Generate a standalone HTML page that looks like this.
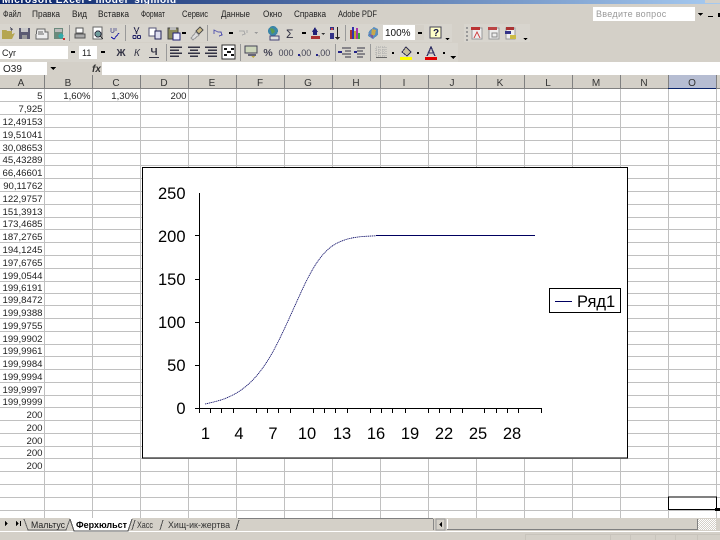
<!DOCTYPE html>
<html>
<head>
<meta charset="utf-8">
<style>
html,body{margin:0;padding:0;width:720px;height:540px;overflow:hidden;background:#fff}
svg{display:block}
text{font-family:"Liberation Sans","DejaVu Sans",sans-serif}
.m text{font-size:9px;fill:#222}
.h text{font-size:10px;fill:#333;text-anchor:middle}
.v text{font-size:9.6px;fill:#222;text-anchor:end}
.c text{font-size:16.5px;fill:#000}
.y text{text-anchor:end}
.x text{text-anchor:middle}
.soft{filter:blur(.35px)}
</style>
</head>
<body>
<svg width="720" height="540" viewBox="0 0 720 540" xmlns="http://www.w3.org/2000/svg" shape-rendering="crispEdges">
<defs>
<linearGradient id="tb" x1="0" x2="1" y1="0" y2="0"><stop offset="0" stop-color="#0a246a"/><stop offset="1" stop-color="#a6caf0"/></linearGradient>
<pattern id="dith" width="2" height="2" patternUnits="userSpaceOnUse"><rect width="2" height="2" fill="#d4d0c8"/><rect width="1" height="1" fill="#fff"/><rect x="1" y="1" width="1" height="1" fill="#fff"/></pattern>
</defs>

<!-- chrome -->
<rect width="720" height="75" fill="#d4d0c8"/>
<rect width="720" height="4" fill="url(#tb)"/>
<clipPath id="tc"><rect width="720" height="4"/></clipPath>
<g clip-path="url(#tc)"><text x="2" y="3" font-size="10" font-weight="bold" fill="#fff" letter-spacing=".6">Microsoft Excel - model_sigmoid</text></g>
<rect x="705" y="0" width="15" height="3" fill="#d4d0c8"/>

<!-- menu -->
<g class="m soft">
<text x="3" y="17" textLength="18" lengthAdjust="spacingAndGlyphs">Файл</text><text x="32" y="17" textLength="28" lengthAdjust="spacingAndGlyphs">Правка</text><text x="72" y="17" textLength="15" lengthAdjust="spacingAndGlyphs">Вид</text><text x="98" y="17" textLength="31" lengthAdjust="spacingAndGlyphs">Вставка</text><text x="141" y="17" textLength="24" lengthAdjust="spacingAndGlyphs">Формат</text><text x="182" y="17" textLength="26" lengthAdjust="spacingAndGlyphs">Сервис</text><text x="221" y="17" textLength="29" lengthAdjust="spacingAndGlyphs">Данные</text><text x="263" y="17" textLength="19" lengthAdjust="spacingAndGlyphs">Окно</text><text x="294" y="17" textLength="32" lengthAdjust="spacingAndGlyphs">Справка</text><text x="338" y="17" textLength="39" lengthAdjust="spacingAndGlyphs">Adobe PDF</text>
</g>
<rect x="593" y="7" width="102" height="14" fill="#fff"/>
<text x="596" y="17" font-size="9" fill="#999" letter-spacing=".3" class="soft">Введите вопрос</text>
<path d="M698 13h5l-2.500 3z" fill="#000"/>
<rect x="708" y="16" width="5" height="1" fill="#000"/><rect x="718" y="13" width="2" height="4" fill="#000"/>

<!-- toolbar backgrounds -->
<rect x="0" y="24" width="452" height="18" fill="#d8d5ce"/>
<rect x="0" y="43" width="458" height="19" fill="#d8d5ce"/>
<rect x="464" y="24" width="66" height="18" fill="#d8d5ce"/>

<!-- toolbar 1 -->
<g class="soft">
<path d="M2 30h4l1 1h5v3l3-1-3 6H2z" fill="#b5a652"/><path d="M10 27l3 2-2 2z" fill="#556"/>
<path d="M19 28h11v11H19z" fill="#5a5a72"/><path d="M21 28h7v4h-7z" fill="#c8c8c8"/><path d="M22 35h5v4h-5z" fill="#999"/>
<path d="M37 29h8v3h3v7H36v-3z" fill="#eee" stroke="#666"/><path d="M38 32h5M38 34h6" stroke="#666"/>
<path d="M54 28h9v11h-9z" fill="#6a8a7c"/><rect x="55" y="29" width="7" height="3" fill="#bbb"/><circle cx="61" cy="36" r="2.400" fill="#3aa"/><rect x="63" y="38" width="2" height="2" fill="#c33"/>
<rect x="69" y="25" width="1" height="16" fill="#999"/>
<path d="M75 34h10v4H75z" fill="#aaa" stroke="#555"/><path d="M76 28h7v5h-7z" fill="#fff" stroke="#555"/>
<path d="M93 27h9v12h-9z" fill="#fff" stroke="#666"/><circle cx="98" cy="34" r="3" fill="#6f9c9c" stroke="#334"/><path d="M100 36l3 3" stroke="#333"/>
<path d="M111 28v3c0 2 3 2 3 0v-3M116 28v3" stroke="#669" fill="none"/><path d="M111 37l3 2 5-6" stroke="#22a" fill="none"/>
<rect x="125" y="25" width="1" height="16" fill="#999"/>
<path d="M134 27l3 7M139 27l-3 7" stroke="#335" fill="none"/><circle cx="134.500" cy="37" r="1.700" fill="none" stroke="#226"/><circle cx="139" cy="37" r="1.700" fill="none" stroke="#226"/>
<path d="M149 28h7v8h-7z" fill="#fff" stroke="#557"/><path d="M155 31h6v8h-6z" fill="#dde" stroke="#225"/>
<path d="M168 28h10v11h-10z" fill="#8a8a5c" stroke="#444"/><rect x="170" y="27" width="6" height="3" fill="#bbb"/><path d="M173 33h7v7h-7z" fill="#eef" stroke="#227"/>
<rect x="182" y="32" width="4" height="2" fill="#000"/>
<path d="M191 38l5-6 3 3-6 5z" fill="#ddd" stroke="#999"/><path d="M196 31l4-4 3 3-4 4z" fill="#cb8" stroke="#555"/>
<rect x="207" y="25" width="1" height="16" fill="#999"/>
<path d="M214 34v-4l4 2 3 0 1 3-3 1" stroke="#5a5ab0" fill="none"/>
<rect x="229" y="32" width="4" height="2" fill="#000"/>
<path d="M239 31h5l1 3-3 1M247 33v-3" stroke="#aaa" fill="none"/>
<path d="M254 32h4l-2 2z" fill="#999"/>
<circle cx="273" cy="31" r="5" fill="#3c86a8"/><path d="M270 28l4 1 1 3-3 2z" fill="#5a9a50"/><rect x="270" y="36" width="9" height="4" fill="#ddd" stroke="#447"/>
<text x="286" y="38" font-size="12" fill="#334" font-family="DejaVu Sans">Σ</text>
<rect x="302" y="32" width="4" height="2" fill="#000"/>
<path d="M315 27l3 5h-6z" fill="#227"/><rect x="313" y="32" width="4" height="3" fill="#227"/><rect x="311" y="36" width="9" height="3" fill="#a33"/><path d="M321 33h4l-2 2z" fill="#333"/>
<path d="M330 27h4v3h-4zM330 33h4v6h-4z" fill="#338"/><rect x="331" y="28" width="2" height="2" fill="#c44"/><path d="M337 27h1v10h2l-2.500 3-2.500-3h2z" fill="#222"/>
<rect x="345" y="25" width="1" height="16" fill="#999"/>
<rect x="350" y="30" width="2" height="9" fill="#a33"/><rect x="352" y="27" width="2" height="12" fill="#33a"/><rect x="354" y="31" width="2" height="8" fill="#ba3"/><rect x="356" y="28" width="2" height="11" fill="#a3a"/><rect x="358" y="33" width="2" height="6" fill="#3a3"/>
<path d="M369 31l5-4 4 2v6l-5 4-5-3z" fill="#5b8fbf"/><path d="M372 29l4 1-1 5-4 1z" fill="#c9a84c"/><path d="M369 34l4 1v4z" fill="#7a5aa0"/>
</g>
<rect x="383" y="25" width="32" height="15" fill="#fff"/>
<text x="385" y="36" font-size="10" fill="#111" class="soft">100%</text>
<rect x="415" y="25" width="9" height="15" fill="#d4d0c8"/><rect x="418" y="32" width="4" height="2" fill="#000"/>
<g class="soft">
<rect x="430" y="27" width="11" height="11" fill="#ffffc8" stroke="#445"/><text x="433" y="36" font-size="10" font-weight="bold" fill="#114">?</text>
<path d="M445 38h5l-2.500 2z" fill="#000"/>
<rect x="466" y="27" width="2" height="2" fill="#999"/><rect x="466" y="31" width="2" height="2" fill="#999"/><rect x="466" y="35" width="2" height="2" fill="#999"/><rect x="466" y="39" width="2" height="2" fill="#999"/>
<path d="M472 28h10v11h-10z" fill="#eee" stroke="#999"/><rect x="471" y="27" width="9" height="3" fill="#b33"/><path d="M474 38l3-6 3 6" stroke="#c33" fill="none"/>
<path d="M489 28h10v11h-10z" fill="#eee" stroke="#999"/><rect x="488" y="27" width="9" height="3" fill="#b44"/><path d="M492 33h5v4h-5z" fill="none" stroke="#888"/>
<path d="M506 28h9v11h-9z" fill="#eee" stroke="#999"/><rect x="506" y="27" width="8" height="3" fill="#a33"/><rect x="505" y="31" width="6" height="3" fill="#338"/><rect x="510" y="35" width="6" height="4" fill="#cb4"/>
<path d="M523 38h5l-2.500 2z" fill="#000"/>
</g>

<!-- toolbar 2 -->
<rect x="0" y="46" width="68" height="13" fill="#fff"/>
<text x="2" y="56" font-size="9" fill="#222" class="soft">Cyr</text>
<rect x="71" y="51" width="4" height="2" fill="#000"/>
<rect x="79" y="46" width="18" height="13" fill="#fff"/>
<text x="82" y="56" font-size="9" fill="#222" class="soft">11</text>
<rect x="101" y="51" width="4" height="2" fill="#000"/>
<g class="soft">
<text x="121" y="56" font-size="10" font-weight="bold" fill="#334" text-anchor="middle">Ж</text>
<text x="137" y="56" font-size="10" font-style="italic" fill="#334" text-anchor="middle">К</text>
<text x="154" y="55" font-size="10" font-weight="bold" fill="#334" text-anchor="middle">Ч</text><rect x="149" y="57" width="10" height="1" fill="#334"/>
<rect x="166" y="44" width="1" height="17" fill="#999"/>
<path d="M170 47h12M170 50h9M170 53h12M170 56h9M188 47h12M190 50h8M188 53h12M190 56h8M205 47h12M208 50h9M205 53h12M208 56h9" stroke="#334" stroke-width="1.500" fill="none"/>
<rect x="222" y="45" width="13" height="14" fill="#fff" stroke="#333"/><path d="M224 49h3M231 49h3M224 55h3M231 55h3M227 52h4" stroke="#111" stroke-width="2"/>
<rect x="240" y="44" width="1" height="17" fill="#999"/>
<rect x="245" y="46" width="12" height="7" fill="#cdd6bb" stroke="#445"/><path d="M250 55h6l-3 3z" fill="#ba4"/><rect x="248" y="54" width="8" height="2" fill="#667"/>
<text x="268" y="56" font-size="10.500" font-weight="bold" fill="#445" text-anchor="middle">%</text>
<text x="286" y="56" font-size="9" fill="#445" text-anchor="middle">000</text>
<text x="305" y="56" font-size="9" fill="#445" text-anchor="middle">,00</text><rect x="298" y="54" width="2" height="2" fill="#228"/>
<text x="324" y="56" font-size="9" fill="#445" text-anchor="middle">,00</text><rect x="316" y="54" width="2" height="2" fill="#228"/>
<rect x="335" y="44" width="1" height="17" fill="#999"/>
<path d="M342 48h9M345 51h6M342 54h9M345 57h6" stroke="#334" fill="none"/><path d="M338 51h4v2h-4z" fill="#228"/>
<path d="M357 48h8M357 51h6M357 54h8M357 57h6" stroke="#334" fill="none"/><path d="M354 51h3v2h-3z" fill="#228"/>
<rect x="370" y="44" width="1" height="17" fill="#999"/>
<path d="M376 47h10v9h-10zM376 50h10M376 53h10M379 47v9M383 47v9" stroke="#aaa" stroke-dasharray="1 1" fill="none"/><rect x="376" y="57" width="11" height="1" fill="#666"/>
<rect x="392" y="52" width="2" height="2" fill="#000"/>
<path d="M402 52l4-5 5 5-4 4z" fill="#c8c0a0" stroke="#335"/><rect x="400" y="57" width="12" height="3" fill="#ffff00"/>
<rect x="417" y="52" width="2" height="2" fill="#000"/>
<path d="M427 56l4-9 4 9M429 53h4" stroke="#336" fill="none" stroke-width="1.300"/><rect x="425" y="57" width="12" height="3" fill="#e00000"/>
<rect x="443" y="52" width="2" height="2" fill="#000"/>
<path d="M450 56h6l-3 3z" fill="#000"/>
</g>

<!-- formula bar -->
<rect x="0" y="62" width="720" height="13" fill="#fff"/>
<rect x="47" y="62" width="55" height="13" fill="#d4d0c8"/>
<text x="3" y="72" font-size="10" fill="#222" class="soft">O39</text>
<path d="M50 67h6l-3 3z" fill="#000"/>
<text x="92" y="72" font-size="10" font-style="italic" font-weight="bold" fill="#333" font-family="Liberation Serif">fx</text>

<!-- sheet grid -->
<rect y="88" width="720" height="430" fill="#fff"/>
<g fill="#c0c0c0">
<rect x="44" y="88" width="1" height="430"/><rect x="92" y="88" width="1" height="430"/><rect x="140" y="88" width="1" height="430"/><rect x="188" y="88" width="1" height="430"/><rect x="236" y="88" width="1" height="430"/><rect x="284" y="88" width="1" height="430"/><rect x="332" y="88" width="1" height="430"/><rect x="380" y="88" width="1" height="430"/><rect x="428" y="88" width="1" height="430"/><rect x="476" y="88" width="1" height="430"/><rect x="524" y="88" width="1" height="430"/><rect x="572" y="88" width="1" height="430"/><rect x="620" y="88" width="1" height="430"/><rect x="668" y="88" width="1" height="430"/><rect x="716" y="88" width="1" height="430"/>
<rect y="101" width="720" height="1"/><rect y="114" width="720" height="1"/><rect y="127" width="720" height="1"/><rect y="140" width="720" height="1"/><rect y="153" width="720" height="1"/><rect y="165" width="720" height="1"/><rect y="178" width="720" height="1"/><rect y="191" width="720" height="1"/><rect y="204" width="720" height="1"/><rect y="217" width="720" height="1"/><rect y="229" width="720" height="1"/><rect y="242" width="720" height="1"/><rect y="255" width="720" height="1"/><rect y="268" width="720" height="1"/><rect y="281" width="720" height="1"/><rect y="293" width="720" height="1"/><rect y="305" width="720" height="1"/><rect y="318" width="720" height="1"/><rect y="331" width="720" height="1"/><rect y="344" width="720" height="1"/><rect y="356" width="720" height="1"/><rect y="369" width="720" height="1"/><rect y="382" width="720" height="1"/><rect y="395" width="720" height="1"/><rect y="407" width="720" height="1"/><rect y="420" width="720" height="1"/><rect y="433" width="720" height="1"/><rect y="446" width="720" height="1"/><rect y="458" width="720" height="1"/><rect y="471" width="720" height="1"/><rect y="484" width="720" height="1"/><rect y="497" width="720" height="1"/><rect y="510" width="720" height="1"/>
</g>

<!-- column headers -->
<rect y="75" width="720" height="13" fill="#d4d0c8"/>
<rect x="668" y="75" width="48" height="13" fill="#b6bdd2"/>
<rect y="88" width="720" height="1" fill="#808080"/>
<rect x="668" y="88" width="48" height="1" fill="#0a246a"/>
<g fill="#808080">
<rect x="44" y="75" width="1" height="13"/><rect x="92" y="75" width="1" height="13"/><rect x="140" y="75" width="1" height="13"/><rect x="188" y="75" width="1" height="13"/><rect x="236" y="75" width="1" height="13"/><rect x="284" y="75" width="1" height="13"/><rect x="332" y="75" width="1" height="13"/><rect x="380" y="75" width="1" height="13"/><rect x="428" y="75" width="1" height="13"/><rect x="476" y="75" width="1" height="13"/><rect x="524" y="75" width="1" height="13"/><rect x="572" y="75" width="1" height="13"/><rect x="620" y="75" width="1" height="13"/><rect x="668" y="75" width="1" height="13"/><rect x="716" y="75" width="1" height="13"/>
</g>
<g class="h soft">
<text x="21" y="86">A</text><text x="68" y="86">B</text><text x="116" y="86">C</text><text x="164" y="86">D</text><text x="212" y="86">E</text><text x="260" y="86">F</text><text x="308" y="86">G</text><text x="356" y="86">H</text><text x="404" y="86">I</text><text x="452" y="86">J</text><text x="500" y="86">K</text><text x="548" y="86">L</text><text x="596" y="86">M</text><text x="644" y="86">N</text><text x="692" y="86">O</text>
</g>

<!-- values -->
<g class="v soft">
<text x="42.500" y="99">5</text><text x="90.500" y="99">1,60%</text><text x="138.500" y="99">1,30%</text><text x="186.500" y="99">200</text>
<text x="42.500" y="112">7,925</text><text x="42.500" y="125">12,49153</text><text x="42.500" y="138">19,51041</text><text x="42.500" y="151">30,08653</text><text x="42.500" y="163">45,43289</text><text x="42.500" y="176">66,46601</text><text x="42.500" y="189">90,11762</text><text x="42.500" y="202">122,9757</text><text x="42.500" y="215">151,3913</text><text x="42.500" y="227">173,4685</text><text x="42.500" y="240">187,2765</text><text x="42.500" y="253">194,1245</text><text x="42.500" y="266">197,6765</text><text x="42.500" y="279">199,0544</text><text x="42.500" y="291">199,6191</text><text x="42.500" y="303">199,8472</text><text x="42.500" y="316">199,9388</text><text x="42.500" y="329">199,9755</text><text x="42.500" y="342">199,9902</text><text x="42.500" y="354">199,9961</text><text x="42.500" y="367">199,9984</text><text x="42.500" y="380">199,9994</text><text x="42.500" y="393">199,9997</text><text x="42.500" y="405">199,9999</text><text x="42.500" y="418">200</text><text x="42.500" y="431">200</text><text x="42.500" y="444">200</text><text x="42.500" y="456">200</text><text x="42.500" y="469">200</text>
</g>

<!-- selected cell -->
<rect x="668.500" y="497" width="48" height="12.500" fill="#fff" stroke="#000" stroke-width="1.400"/>
<rect x="715" y="508" width="5" height="3" fill="#000"/>

<!-- chart -->
<rect x="142.500" y="167.500" width="485" height="290.500" fill="#fff" stroke="#000"/>
<g fill="#000">
<rect x="199" y="193" width="1" height="216"/>
<rect x="199" y="408" width="343" height="1"/>
<rect x="195" y="235" width="4" height="1"/><rect x="195" y="279" width="4" height="1"/><rect x="195" y="322" width="4" height="1"/><rect x="195" y="365" width="4" height="1"/><rect x="195" y="408" width="4" height="1"/>
<rect x="199" y="408" width="1" height="5"/><rect x="210" y="408" width="1" height="5"/><rect x="221" y="408" width="1" height="5"/><rect x="233" y="408" width="1" height="5"/><rect x="256" y="408" width="1" height="5"/><rect x="267" y="408" width="1" height="5"/><rect x="278" y="408" width="1" height="5"/><rect x="290" y="408" width="1" height="5"/><rect x="313" y="408" width="1" height="5"/><rect x="324" y="408" width="1" height="5"/><rect x="335" y="408" width="1" height="5"/><rect x="347" y="408" width="1" height="5"/><rect x="370" y="408" width="1" height="5"/><rect x="381" y="408" width="1" height="5"/><rect x="392" y="408" width="1" height="5"/><rect x="405" y="408" width="1" height="5"/><rect x="428" y="408" width="1" height="5"/><rect x="439" y="408" width="1" height="5"/><rect x="450" y="408" width="1" height="5"/><rect x="462" y="408" width="1" height="5"/><rect x="484" y="408" width="1" height="5"/><rect x="496" y="408" width="1" height="5"/><rect x="507" y="408" width="1" height="5"/><rect x="518" y="408" width="1" height="5"/><rect x="541" y="408" width="1" height="5"/>
</g>
<g class="c y">
<text x="185.500" y="199">250</text><text x="185.500" y="242">200</text><text x="185.500" y="285">150</text><text x="185.500" y="328">100</text><text x="185.500" y="371">50</text><text x="185.500" y="414">0</text>
</g>
<g class="c x">
<text x="205.500" y="439">1</text><text x="239" y="439">4</text><text x="273" y="439">7</text><text x="307" y="439">10</text><text x="342" y="439">13</text><text x="376" y="439">16</text><text x="410" y="439">19</text><text x="444" y="439">22</text><text x="478" y="439">25</text><text x="512" y="439">28</text>
</g>
<path shape-rendering="geometricPrecision" fill="none" stroke="#000060" stroke-width=".8" stroke-dasharray="1.300 .6" d="M205 404Q216.900 401.400 222.550 399.450Q228.200 397.500 233.900 394.450Q239.600 391.400 245.300 386.850Q251 382.300 256.700 375.650Q262.400 369 268.050 359.950Q273.700 350.900 279.400 339.200Q285.100 327.500 290.800 314.800Q296.500 302.100 302.150 289.800Q307.800 277.500 313.500 267.950Q319.200 258.400 324.900 252.450Q330.600 246.500 336.250 243.550Q341.900 240.600 347.600 239.050Q353.300 237.500 359 236.900Q364.700 236.300 370.350 236.050L376 235.800"/>
<rect x="376" y="235" width="159" height="1" fill="#000060"/>
<rect x="549.500" y="288.500" width="71" height="24" fill="#fff" stroke="#000"/>
<rect x="555" y="301" width="17" height="1" fill="#000060"/>
<text x="577" y="307" font-size="16.500" fill="#000">Ряд1</text>

<!-- tab bar -->
<rect y="518" width="720" height="22" fill="#d4d0c8"/>
<rect x="238" y="518" width="195" height="1" fill="#808080"/>
<rect y="531" width="720" height="1" fill="#fff"/>
<g class="soft">
<path d="M5 526v-5l3 2.500zM16 521v5l3-2.500zM20 521h1v5h-1z" fill="#000"/>
<path d="M24 519l4 11h38l4-11" fill="#d4d0c8" stroke="#666"/>
<text x="31" y="528" font-size="9.500" fill="#222" textLength="34" lengthAdjust="spacingAndGlyphs">Мальтус</text>
<path d="M70 518l4 13h54l4-13z" fill="#fff"/><path d="M70 519l4 12h54l4-12" fill="none" stroke="#555"/>
<text x="76" y="528" font-size="9.500" font-weight="bold" fill="#000" textLength="51" lengthAdjust="spacingAndGlyphs">Ферхюльст</text>
<path d="M132 530l3-10M160 530l3-10" stroke="#555" fill="none"/>
<text x="137" y="528" font-size="9.500" fill="#333" textLength="16" lengthAdjust="spacingAndGlyphs">Хасс</text>
<text x="168" y="528" font-size="9.500" fill="#333" textLength="62" lengthAdjust="spacingAndGlyphs">Хищ-ик-жертва</text>
<path d="M236 530l3-10" stroke="#555" fill="none"/>
</g>
<!-- scrollbar -->
<rect x="433" y="519" width="1" height="11" fill="#888"/>
<rect x="436" y="519" width="9" height="11" fill="#d4d0c8" stroke="#999"/>
<path d="M442 522v5l-3-2.500z" fill="#000"/>
<rect x="447" y="529" width="250" height="1" fill="#808080"/>
<rect x="447" y="519" width="1" height="10" fill="#fff"/>
<rect x="697" y="519" width="1" height="11" fill="#808080"/>
<rect x="698" y="519" width="18" height="11" fill="url(#dith)"/>
<!-- status bar -->
<g fill="#c8c4bc"><rect x="525" y="534" width="1" height="6"/><rect x="610" y="534" width="1" height="6"/><rect x="630" y="534" width="1" height="6"/><rect x="655" y="534" width="1" height="6"/><rect x="675" y="534" width="1" height="6"/><rect x="697" y="534" width="1" height="6"/></g>
<rect x="525" y="534" width="195" height="1" fill="#c8c4bc"/>
</svg>
</body>
</html>
